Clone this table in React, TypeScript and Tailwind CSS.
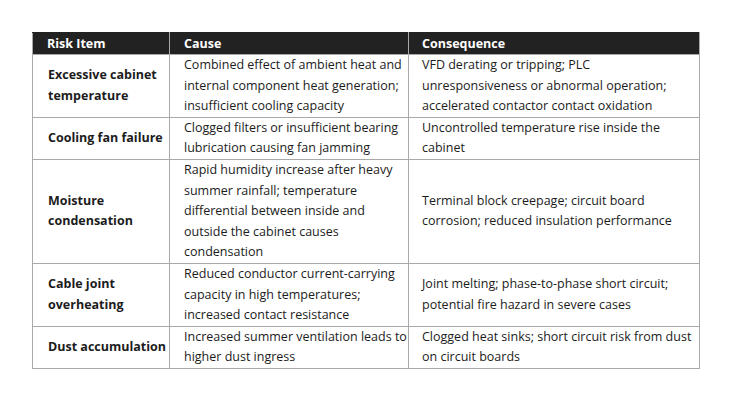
import React from "react";

type Row = {
    item: string[];
    cause: string[];
    consequence: string[];
};

const rows: Row[] = [
    {
        item: ["Excessive cabinet", "temperature"],
        cause: [
            "Combined effect of ambient heat and",
            "internal component heat generation;",
            "insufficient cooling capacity",
        ],
        consequence: [
            "VFD derating or tripping; PLC",
            "unresponsiveness or abnormal operation;",
            "accelerated contactor contact oxidation",
        ],
    },
    {
        item: ["Cooling fan failure"],
        cause: ["Clogged filters or insufficient bearing", "lubrication causing fan jamming"],
        consequence: ["Uncontrolled temperature rise inside the", "cabinet"],
    },
    {
        item: ["Moisture", "condensation"],
        cause: [
            "Rapid humidity increase after heavy",
            "summer rainfall; temperature",
            "differential between inside and",
            "outside the cabinet causes",
            "condensation",
        ],
        consequence: ["Terminal block creepage; circuit board", "corrosion; reduced insulation performance"],
    },
    {
        item: ["Cable joint", "overheating"],
        cause: [
            "Reduced conductor current-carrying",
            "capacity in high temperatures;",
            "increased contact resistance",
        ],
        consequence: ["Joint melting; phase-to-phase short circuit;", "potential fire hazard in severe cases"],
    },
    {
        item: ["Dust accumulation"],
        cause: ["Increased summer ventilation leads to", "higher dust ingress"],
        consequence: ["Clogged heat sinks; short circuit risk from dust", "on circuit boards"],
    },
];

function Lines({ lines }: { lines: string[] }) {
    return (
        <>
            {lines.map((line, i) => (
                <span key={i} className="block whitespace-nowrap">
                    {line}
                </span>
            ))}
        </>
    );
}

export default function App() {
    return (
        <div className="w-[735px] h-[402px] bg-white pt-[32px] pl-[32px] font-['Open_Sans','Noto_Sans',sans-serif] text-[12.5px] leading-[20.6px] text-[#1c1c1c]">
            <table className="table-fixed border-collapse w-[667px]">
                <colgroup>
                    <col className="w-[137px]" />
                    <col className="w-[239px]" />
                    <col className="w-[291px]" />
                </colgroup>
                <thead>
                    <tr className="bg-[#222222] text-white font-bold text-left h-[22px]">
                        <th className="border border-[#a9a9a9] border-t-[#222222] pl-[14px] py-0 leading-[20px]">Risk Item</th>
                        <th className="border border-[#a9a9a9] border-t-[#222222] pl-[14px] py-0 leading-[20px]">Cause</th>
                        <th className="border border-[#a9a9a9] border-t-[#222222] pl-[13px] py-0 leading-[20px]">Consequence</th>
                    </tr>
                </thead>
                <tbody>
                    {rows.map((row, index) => (
                        <tr key={index}>
                            <td className="border border-[#a9a9a9] pl-[15px] py-0 align-middle font-bold">
                                <Lines lines={row.item} />
                            </td>
                            <td className="border border-[#a9a9a9] pl-[14px] py-0 align-middle">
                                <Lines lines={row.cause} />
                            </td>
                            <td className="border border-[#a9a9a9] pl-[13px] py-0 align-middle">
                                <Lines lines={row.consequence} />
                            </td>
                        </tr>
                    ))}
                </tbody>
            </table>
        </div>
    );
}
